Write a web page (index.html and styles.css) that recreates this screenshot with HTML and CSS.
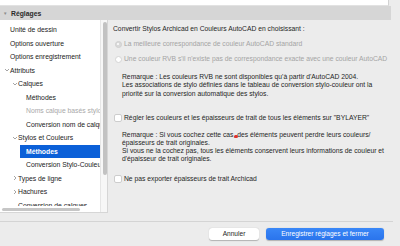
FILE: index.html
```html
<!DOCTYPE html>
<html lang="fr">
<head>
    <meta charset="UTF-8">
    <title>Réglages</title>
    <link rel="stylesheet" href="styles.css">
</head>
<body>
    <div class="window">
        <div class="top-strip"><div class="top-field"></div></div>

        <div class="section-head"><span class="disclosure">&#9660;</span>Réglages</div>

        <div class="content">
            <div class="sidebar">
                <div class="tree-wrap">
                    <ul class="tree">
                        <li class="row lvl0">Unité de dessin</li>
                        <li class="row lvl0">Options ouverture</li>
                        <li class="row lvl0">Options enregistrement</li>
                        <li class="row lvl0 parent">
                            <svg class="chev" viewBox="0 0 6 6"><polyline points="1,2 3,4 5,2"/></svg>Attributs
                        </li>
                        <li class="row lvl1 parent">
                            <svg class="chev" viewBox="0 0 6 6"><polyline points="1,2 3,4 5,2"/></svg>Calques
                        </li>
                        <li class="row lvl2">Méthodes</li>
                        <li class="row lvl2 dim">Noms calque basés stylo</li>
                        <li class="row lvl2">Conversion nom de calques</li>
                        <li class="row lvl1 parent">
                            <svg class="chev" viewBox="0 0 6 6"><polyline points="1,2 3,4 5,2"/></svg>Stylos et Couleurs
                        </li>
                        <li class="row lvl2 selected">Méthodes</li>
                        <li class="row lvl2">Conversion Stylo-Couleur</li>
                        <li class="row lvl1 parent">
                            <svg class="chev" viewBox="0 0 6 6"><polyline points="2,1 4,3 2,5"/></svg>Types de ligne
                        </li>
                        <li class="row lvl1 parent">
                            <svg class="chev" viewBox="0 0 6 6"><polyline points="2,1 4,3 2,5"/></svg>Hachures
                        </li>
                        <li class="row lvl1">Conversion de calques</li>
                    </ul>
                    <div class="hscroll"><div class="hthumb"></div></div>
                </div>
                <div class="vscroll"><div class="vthumb"></div></div>
            </div>

            <div class="panel">
                <p class="intro">Convertir Stylos Archicad en Couleurs AutoCAD en choisissant :</p>

                <div class="options">
                    <label class="option disabled">
                        <span class="radio checked"></span>La meilleure correspondance de couleur AutoCAD standard
                    </label>
                    <label class="option disabled">
                        <span class="radio"></span>Une couleur RVB s'il n'existe pas de correspondance exacte avec une couleur AutoCAD
                    </label>
                </div>

                <p class="note note-first">
                    Remarque : Les couleurs RVB ne sont disponibles qu'à partir d'AutoCAD 2004.<br>
                    Les associations de stylo définies dans le tableau de conversion stylo-couleur ont la<br>
                    priorité sur la conversion automatique des stylos.
                </p>

                <label class="option check-row">
                    <span class="checkbox"></span>Régler les couleurs et les épaisseurs de trait de tous les éléments sur "BYLAYER"
                </label>

                <p class="note note-second">
                    Remarque : Si vous cochez cette cas<span class="marker"></span>, des éléments peuvent perdre leurs couleurs/<br>
                    épaisseurs de trait originales.<br>
                    Si vous ne la cochez pas, tous les éléments conservent leurs informations de couleur et<br>
                    d'épaisseur de trait originales.
                </p>

                <label class="option check-row last">
                    <span class="checkbox"></span>Ne pas exporter épaisseurs de trait Archicad
                </label>
            </div>
        </div>

        <div class="footer">
            <button class="btn">Annuler</button>
            <button class="btn primary">Enregistrer réglages et fermer</button>
        </div>
    </div>
</body>
</html>
```

FILE: styles.css
```css
* {
    margin: 0;
    padding: 0;
    box-sizing: border-box;
}

body {
    width: 400px;
    height: 246px;
    overflow: hidden;
    background: #ececec;
    font-family: "Liberation Sans", Arial, sans-serif;
    font-size: 6.75px;
    color: #262626;
}

.window {
    display: flex;
    flex-direction: column;
    height: 246px;
}

/* top field and section header */
.top-strip {
    height: 6px;
    display: flex;
}

.top-field {
    width: 389px;
    background: #fff;
    border-right: 1px solid #d2d2d2;
    border-bottom: 1px solid #e2e2e2;
}

.section-head {
    width: 391px;
    height: 14px;
    background: #d6d6d6;
    display: flex;
    align-items: center;
    padding-left: 3px;
    font-weight: bold;
    font-size: 6.8px;
    color: #2a2a2a;
}

.disclosure {
    width: 8px;
    font-size: 4.5px;
    color: #8c8c8c;
}

/* sidebar tree */
.content {
    display: flex;
    height: 193px;
}

.sidebar {
    width: 108px;
    display: flex;
    border-right: 1px solid #d6d6d6;
    border-bottom: 1px solid #d6d6d6;
}

.tree-wrap {
    width: 100px;
    background: #fff;
    display: flex;
    flex-direction: column;
}

.tree {
    list-style: none;
    height: 186px;
    overflow: hidden;
    padding-top: 3px;
}

.row {
    height: 13.5px;
    display: flex;
    align-items: center;
    white-space: nowrap;
    overflow: hidden;
    font-size: 6.8px;
    color: #222;
}

.lvl0 { padding-left: 10px; }
.lvl0.parent { padding-left: 4px; }
.lvl1 { padding-left: 18px; }
.lvl1.parent { padding-left: 12px; }
.lvl2 {
    margin-left: 20px;
    padding-left: 6px;
}

.row.dim { color: #a9a9a9; }

.row.selected {
    background: #0b60d8;
    color: #fff;
    font-weight: bold;
}

.chev {
    width: 6px;
    height: 6px;
    flex-shrink: 0;
}

.chev polyline {
    fill: none;
    stroke: #8e8e8e;
    stroke-width: 0.8;
}

.hscroll {
    height: 6px;
    padding: 1.5px 0 0 2px;
}

.hthumb {
    width: 78px;
    height: 3px;
    border-radius: 2px;
    background: #c6c6c6;
}

.vscroll {
    width: 7px;
    background: #f7f7f7;
    border-left: 1px solid #e6e6e6;
    padding: 2px 0 0 1.5px;
}

.vthumb {
    width: 4px;
    height: 153px;
    border-radius: 2px;
    background: #c2c2c2;
}

/* right panel */
.panel {
    flex: 1;
    padding: 5px 0 0 5px;
    line-height: 8.2px;
}

.intro {
    margin-bottom: 3.5px;
}

.option {
    display: flex;
    align-items: center;
    white-space: nowrap;
}

.options .option {
    height: 15px;
    padding-left: 1.5px;
}

.option.disabled {
    color: #a4a4a4;
}

.radio {
    width: 7px;
    height: 7px;
    border-radius: 50%;
    background: #fff;
    border: 0.5px solid #d4d4d4;
    margin-right: 2.5px;
    display: flex;
    align-items: center;
    justify-content: center;
}

.radio.checked {
    background: #d9d9d9;
    border-color: #d0d0d0;
}

.radio.checked::after {
    content: "";
    width: 2.5px;
    height: 2.5px;
    border-radius: 50%;
    background: #fff;
}

.note {
    padding-left: 9px;
}

.note-first {
    margin-top: 6.3px;
    line-height: 8.4px;
}

.check-row {
    height: 12px;
    margin-top: 14px;
    padding-left: 1px;
}

.note-second {
    margin-top: 7px;
    line-height: 8px;
}

.check-row.last {
    margin-top: 10px;
}

.checkbox {
    width: 8px;
    height: 8px;
    border-radius: 2px;
    background: #fff;
    border: 0.5px solid #cdcdcd;
    margin-right: 2px;
}

.marker {
    position: relative;
}

.marker::after {
    content: "";
    position: absolute;
    left: 0.5px;
    top: 4px;
    width: 4.5px;
    height: 2.5px;
    border-radius: 1.5px;
    background: #e0322b;
}

/* footer buttons */
.footer {
    flex: 1;
    display: flex;
    justify-content: flex-end;
    align-items: flex-start;
    gap: 7px;
    margin-top: 8px;
    border-top: 1px solid #d4d4d4;
    padding: 6px 9px 0 0;
    width: 393px;
}

.btn {
    height: 11.5px;
    border: none;
    border-radius: 3px;
    background: #fff;
    box-shadow: 0 0.5px 1px rgba(0, 0, 0, 0.25);
    font-family: "Liberation Sans", Arial, sans-serif;
    font-size: 6.6px;
    color: #262626;
    width: 50px;
}

.btn.primary {
    width: 118px;
    background: linear-gradient(#3a87f7, #2a74ec);
    color: #fff;
}
```
